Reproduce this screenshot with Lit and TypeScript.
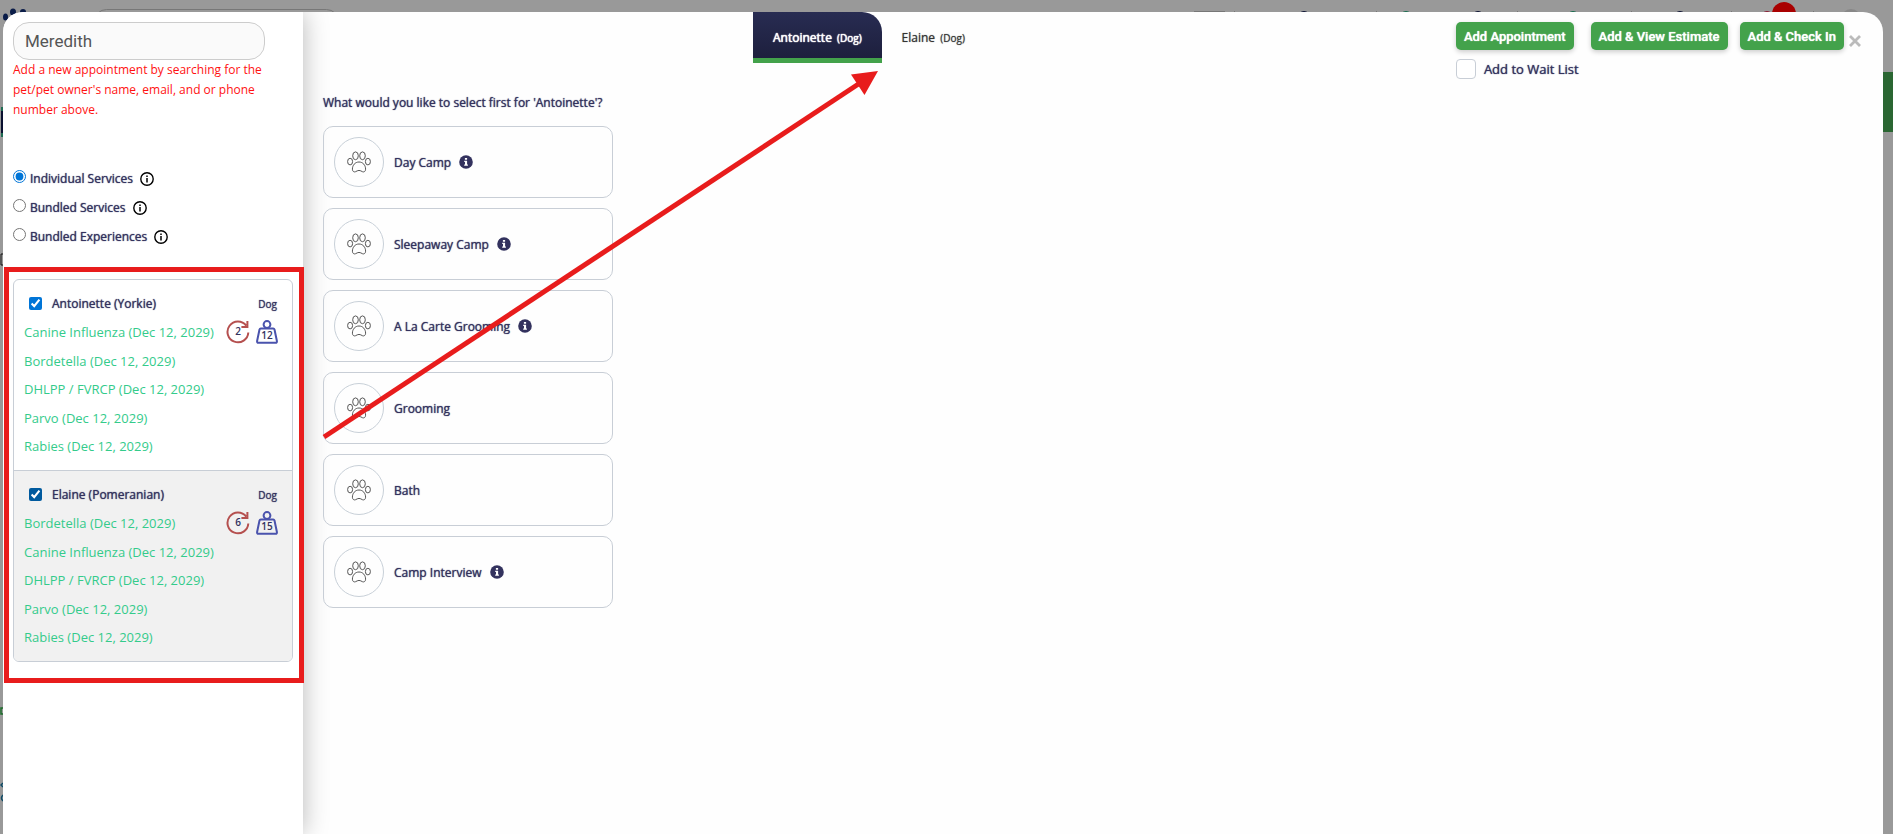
import { LitElement, html, css, svg, nothing } from "lit";
import { customElement, property, state } from "lit/decorators.js";

const infoOutline = svg`<svg width="16" height="16" viewBox="0 0 16 16" fill="none" stroke="#000" aria-hidden="true"><circle cx="8" cy="8" r="6.2" stroke-width="1.4"/><path d="M8 7v4.4M8 4.5v1.5" stroke-width="1.5"/></svg>`;
const infoSolid = svg`<svg width="14" height="14" viewBox="0 0 14 14" aria-hidden="true"><circle cx="7" cy="7" r="6.8" fill="#33325e"/><path d="M5.9 2.9h2.2v1.8H5.9zM5.2 5.7h2.9v3.7h.8v1.3H5.2V9.4H6V7h-.8z" fill="#fff"/></svg>`;
const paw = svg`<svg width="24" height="22" viewBox="0 0 24 22" fill="none" stroke="#555" stroke-width="1" aria-hidden="true"><ellipse cx="8.5" cy="4.8" rx="2.8" ry="3.9"/><ellipse cx="15.5" cy="4.8" rx="2.8" ry="3.9"/><ellipse cx="3.1" cy="10.6" rx="2.5" ry="3.3"/><ellipse cx="20.9" cy="10.6" rx="2.5" ry="3.3"/><path d="M12 11c-4 0-6.6 3.400-6.600 7.200 0 2.200 1.600 3.200 3.200 2.500 1.200-.5 1.900-1.300 3.400-1.300s2.200.8 3.400 1.300c1.600.7 3.200-.3 3.200-2.500C18.600 14.400 16 11 12 11z"/></svg>`;

interface Pet { name: string; breed: string; visits: number; weight: number; vaccines: string[] }

const PETS: Pet[] = [
  { name: "Antoinette", breed: "Yorkie", visits: 2, weight: 12, vaccines: ["Canine Influenza", "Bordetella", "DHLPP / FVRCP", "Parvo", "Rabies"] },
  { name: "Elaine", breed: "Pomeranian", visits: 6, weight: 15, vaccines: ["Bordetella", "Canine Influenza", "DHLPP / FVRCP", "Parvo", "Rabies"] },
];

const SERVICES = [
  { name: "Day Camp", info: true },
  { name: "Sleepaway Camp", info: true },
  { name: "A La Carte Grooming", info: true },
  { name: "Grooming", info: false },
  { name: "Bath", info: false },
  { name: "Camp Interview", info: true },
];

@customElement("pet-card")
class PetCard extends LitElement {
  @property({ attribute: false }) pet!: Pet;

  static styles = css`
    :host { display: block; padding: 9px 10px 10px; color: #33325e; font-size: 13px; }
    .head { display: flex; align-items: center; height: 29px; padding: 0 5px; }
    .head input { width: 13px; height: 13px; margin: 0 10px 0 0; accent-color: var(--tick, #0075d7); }
    .name { flex: 1; font-size: 12px; text-shadow: 0 0 1px #33325e; }
    .kind { font-size: 10px; text-shadow: 0 0 1px #33325e; }
    .body { display: flex; justify-content: space-between; }
    ul { display: grid; align-content: space-between; height: 142px; list-style: none; margin: 0; padding: 0; color: #34cb8b; line-height: 28px; white-space: nowrap; }
    .badges { display: flex; gap: 6px; padding: 2px 4px 0 0; }
    .badges text { font: 600 10px "Open Sans", sans-serif; fill: #33325e; text-anchor: middle; }
  `;

  render() {
    const p = this.pet;
    return html`
      <div class="head">
        <input type="checkbox" id="pick" checked />
        <label class="name" for="pick">${p.name} (${p.breed})</label>
        <span class="kind">Dog</span>
      </div>
      <div class="body">
        <ul>${p.vaccines.map((v) => html`<li>${v} (Dec 12, 2029)</li>`)}</ul>
        <div class="badges">
          <svg width="24" height="24" viewBox="0 0 24 24" fill="none" stroke="#b5504f" stroke-width="2"><path d="M20.200 5.600A10.400 10.400 0 1 0 22.300 12.500M21.400 1v6h-6"/><text x="12" y="15" stroke="none">${p.visits}</text></svg>
          <svg width="22" height="24" viewBox="0 0 22 24" fill="none" stroke="#4a53ad" stroke-width="2"><circle cx="11" cy="4.500" r="3.400"/><path d="M4.800 8.500h12.400q1 0 1.300 1l2.400 11.500q.2 1.800-1.300 1.800H2.400q-1.500 0-1.300-1.800L3.500 9.500q.3-1 1.300-1z"/><text x="11" y="19" stroke="none">${p.weight}</text></svg>
        </div>
      </div>`;
  }
}

@customElement("service-card")
class ServiceCard extends LitElement {
  @property() name = "";
  @property({ type: Boolean }) info = false;

  static styles = css`
    :host { display: block; }
    .card { display: flex; align-items: center; width: 100%; height: 72px; box-sizing: border-box; padding: 0 10px; border: 1px solid #c8ced6; border-radius: 10px; background: transparent; font: 12px "Open Sans", sans-serif; color: #33325e; text-shadow: 0 0 1px #33325e; }
    .disc { display: grid; place-items: center; width: 48px; height: 48px; border: 1px solid #c8d0d8; border-radius: 50%; margin-right: 10px; }
    .label { margin-right: 8px; }
    svg { display: block; }
  `;

  render() {
    return html`<button class="card"><span class="disc">${paw}</span><span class="label">${this.name}</span>${this.info ? infoSolid : nothing}</button>`;
  }
}

@customElement("app-root")
class AppRoot extends LitElement {
  @state() mode = "Individual Services";

  static styles = css`
    :host { display: block; position: relative; height: 100vh; overflow: hidden; box-sizing: border-box; padding: 12px 10px 0 3px; background: #999; font-family: "Open Sans", sans-serif; color: #33325e; }
    .page { position: absolute; inset: 0; }
    .page svg { position: absolute; top: 0; display: block; }
    .page .left { left: 0; }
    .page .right { right: 0; }
    .modal { position: relative; display: flex; height: 100%; background: #fefefe; border-radius: 20px 20px 0 0; overflow: hidden; }
    .side { flex: none; width: 300px; box-sizing: border-box; padding: 10px; background: #fff; box-shadow: 0 0 24px #00000048; }
    .search { display: block; box-sizing: border-box; width: 252px; height: 38px; padding: 0 11px; border: 1px solid #ccc; border-radius: 16px; background: #fafafa; color: #555; font: 17px Roboto, sans-serif; }
    .hint { margin: 0 0 44px; font-size: 12px; line-height: 20px; color: #f11; }
    .modes { border: 0; margin: 0; padding: 0; }
    .mode { display: flex; align-items: center; height: 29px; font-size: 12px; text-shadow: 0 0 1px #33325e; }
    .mode input { width: 13px; height: 13px; margin: 0 4px 4px 0; accent-color: #0075d7; }
    .mode svg { margin-left: 6px; }
    .pets { margin-top: 28px; border: 1px solid #c8ced6; border-radius: 6px; overflow: hidden; }
    .pets .alt { border-top: 1px solid #c8ced6; background: #f1f1f1; --tick: #005a9e; }
    .main { flex: 1; display: grid; grid-template-columns: 430px auto 1fr; grid-template-rows: 81px auto; align-content: start; padding: 0 20px; }
    .tabs { display: flex; align-items: flex-start; grid-column: 2; }
    .tab { height: 51px; border: 0; padding: 0 20px; background: none; font: 12px "Open Sans", sans-serif; color: #333; text-shadow: 0 0 1px #666; }
    .tab small { font-size: 10px; margin-left: 2px; }
    .tab.on { color: #fff; background: linear-gradient(#282c52, #1c1e3b); box-shadow: inset 0 -5px #43a24b; border-radius: 0 20px 0 0; text-shadow: 0 0 1px #fff, 0 0 1px #fff; }
    .actions { justify-self: end; padding: 10px 2px 0 0; }
    .row { display: flex; align-items: center; }
    .act { height: 28px; border: 0; border-radius: 5px; padding: 0 8px; background: #43a24b; color: #fff; font: 500 13px Roboto, sans-serif; text-shadow: 0 0 1px #fff; box-shadow: 0 2px 5px #0003; }
    .act.first { margin-right: 17px; }
    .act.second { margin-right: 12px; }
    .close { display: grid; place-items: center; border: 0; background: none; padding: 10px 0 0 5px; }
    .wait { display: flex; align-items: center; gap: 8px; margin-top: 9px; font-size: 13px; text-shadow: 0 0 1px #33325e; }
    .wait input { appearance: none; width: 20px; height: 20px; margin: 0; border: 1px solid #c8ced6; border-radius: 4px; background: #fff; }
    .services { grid-column: 1; width: 290px; }
    h2 { margin: 0 0 13px; font-size: 12px; line-height: 20px; font-weight: 400; text-shadow: 0 0 1px #33325e; }
    .list { display: grid; gap: 10px; }
    .marks { position: absolute; left: 0; top: 0; pointer-events: none; }
  `;

  render() {
    return html`
      <div class="page" aria-hidden="true">
        <svg class="left" width="400" height="834">
          <g fill="#0a1c48"><ellipse cx="13" cy="12" rx="3" ry="3.500"/><ellipse cx="5.500" cy="17" rx="2.500" ry="3.500"/><ellipse cx="23" cy="12" rx="3" ry="3"/></g>
          <rect x="94.500" y="9.500" width="244" height="30" rx="12" fill="none" stroke="#777"/>
          <path d="M1 107h4v30H1z" fill="#1e6b52"/><path d="M1 111h4v22H1z" fill="#0a1030"/>
          <path d="M3 254H1v11h2" fill="none" stroke="#111"/>
          <path d="M3 708H1v6h2" fill="none" stroke="#1b6b2a" stroke-width="1.500"/>
          <path d="M3 783l-2 2 2 2M3 795q-3 3 0 6" fill="none" stroke="#0d4a66" stroke-width="1.500"/>
        </svg>
        <svg class="right" width="700" height="140">
          <path d="M690 72h10v60h-10z" fill="#2a6632"/>
          <path d="M1 11.500h31M41.500 11v2M183.500 11v2M324.500 11v2M438.500 11v2M538.500 11v2M620.500 11v2" stroke="#777"/>
          <g fill="#0a1030"><circle cx="111" cy="17" r="6"/><circle cx="285" cy="17" r="6"/><circle cx="487" cy="17" r="6"/></g>
          <g fill="#156a4c"><circle cx="213" cy="17" r="6"/><circle cx="380" cy="17" r="6"/></g>
          <circle cx="574" cy="17" r="6" fill="#8a1830"/><circle cx="591" cy="14" r="12" fill="#a90000"/><circle cx="658" cy="19" r="10" fill="#888"/>
        </svg>
      </div>
      <div class="modal">
        <aside class="side">
          <input class="search" aria-label="Search pet or owner" value="Meredith" />
          <p class="hint">Add a new appointment by searching for the pet/pet owner's name, email, and or phone number above.</p>
          <fieldset class="modes" aria-label="Service type">
            ${["Individual Services", "Bundled Services", "Bundled Experiences"].map(
              (m) => html`<label class="mode"><input type="radio" name="mode" .checked=${m === this.mode} @change=${() => (this.mode = m)} />${m}${infoOutline}</label>`
            )}
          </fieldset>
          <div class="pets">${PETS.map((p, i) => html`<pet-card class=${i ? "alt" : ""} .pet=${p}></pet-card>`)}</div>
        </aside>
        <main class="main">
          <nav class="tabs">
            ${PETS.map((p, i) => html`<button class="tab ${i ? "" : "on"}">${p.name} <small>(Dog)</small></button>`)}
          </nav>
          <div class="actions">
            <div class="row">
              <button class="act first">Add Appointment</button>
              <button class="act second">Add &amp; View Estimate</button>
              <button class="act">Add &amp; Check In</button>
              <button class="close" aria-label="Close"><svg width="12" height="12" viewBox="0 0 12 12" stroke="#bbb" stroke-width="2.800"><path d="M1 1l10 10M11 1L1 11"/></svg></button>
            </div>
            <label class="wait"><input type="checkbox" />Add to Wait List</label>
          </div>
          <section class="services">
            <h2>What would you like to select first for 'Antoinette'?</h2>
            <div class="list">${SERVICES.map((s) => html`<service-card .name=${s.name} .info=${s.info}></service-card>`)}</div>
          </section>
        </main>
      </div>
      <svg class="marks" width="900" height="700" aria-hidden="true">
        <rect x="6.500" y="269.500" width="295" height="411" fill="none" stroke="#e81c1c" stroke-width="5"/>
        <path d="M324 437L860 83" stroke="#e81c1c" stroke-width="5"/>
        <path d="M878 71L851 74.500 864.500 95z" fill="#e81c1c"/>
      </svg>`;
  }
}
